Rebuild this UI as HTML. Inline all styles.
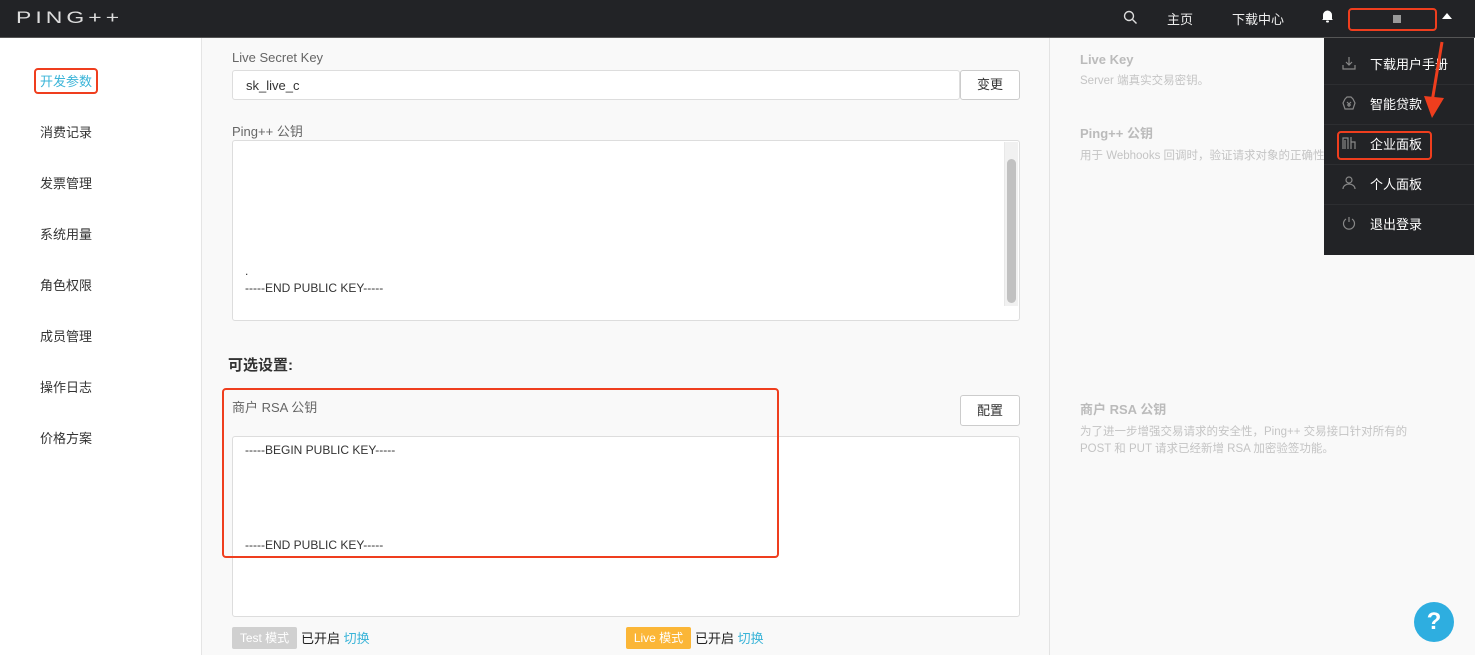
<!DOCTYPE html>
<html><head><meta charset="utf-8"><style>
*{box-sizing:border-box;margin:0;padding:0}
body{width:1475px;height:655px;overflow:hidden;background:#f9f9f9;font-family:"Liberation Sans","Noto Sans CJK SC",sans-serif;font-size:13px;color:#333;position:relative}
.top{position:absolute;left:0;top:0;width:1475px;height:38px;background:#222326;border-bottom:1px solid #555}
.abs{position:absolute}
.side{position:absolute;left:0;top:38px;width:202px;height:617px;background:#fff;border-right:1px solid #e5e5e5}
.side div{position:absolute;left:40px;font-size:13px;color:#333}
.vline{position:absolute;left:1049px;top:38px;width:1px;height:617px;background:#e3e3e3}
.lbl{position:absolute;font-size:13px;color:#666}
.inp{position:absolute;background:#fff;border:1px solid #ddd;border-radius:3px}
.btn{position:absolute;background:#fff;border:1px solid #ccc;border-radius:3px;text-align:center;font-size:13px;color:#333}
.mono{position:absolute;font-size:12px;color:#333}
.rt{position:absolute;left:1080px;color:#bbb}
.rt b{display:block;font-size:13px;color:#bbb}
.rt p{font-size:11.5px;color:#c4c4c4;line-height:17px;margin-top:6px}
.menu{position:absolute;left:1324px;top:38px;width:150px;height:217px;background:#222326}
.menu .it{position:absolute;left:0;width:150px;height:40px;color:#fff;font-size:13px;border-bottom:1px solid #2d2e31}
.menu .it span{position:absolute;left:46px;top:9px}
.menu svg{position:absolute;left:18px;top:11px}
.red{position:absolute;border:2px solid #ef3e1e;border-radius:4px}
</style></head><body>
<div class="top">
<div class="abs" style="left:16px;top:8px;font-size:17px;letter-spacing:3px;color:#ddd;font-weight:300;transform:scaleX(1.35);transform-origin:left">PING++</div>
<svg class="abs" style="left:1123px;top:10px" width="15" height="15" viewBox="0 0 15 15"><circle cx="6" cy="6" r="4.5" fill="none" stroke="#ddd" stroke-width="1.4"/><path d="M9.5 9.5L13.5 13.5" stroke="#ddd" stroke-width="1.4"/></svg>
<div class="abs" style="left:1167px;top:9px;color:#eee">主页</div>
<div class="abs" style="left:1232px;top:9px;color:#eee">下载中心</div>
<svg class="abs" style="left:1321px;top:9px" width="13" height="14" viewBox="0 0 13 14"><path d="M2 10V6a4.5 4.5 0 019 0v4l1 1H1z" fill="#fff"/><rect x="5" y="11.5" width="3" height="2" rx="1" fill="#fff"/></svg>
<div class="abs" style="left:1393px;top:15px;width:8px;height:8px;background:#999"></div>
<div class="abs" style="left:1442px;top:13px;width:0;height:0;border-left:5px solid transparent;border-right:5px solid transparent;border-bottom:6px solid #fff"></div>
</div>
<div class="red" style="left:1348px;top:8px;width:89px;height:23px"></div>

<div class="side">
<div style="top:33px;color:#3ab4d8">开发参数</div>
<div style="top:84px">消费记录</div>
<div style="top:135px">发票管理</div>
<div style="top:186px">系统用量</div>
<div style="top:237px">角色权限</div>
<div style="top:288px">成员管理</div>
<div style="top:339px">操作日志</div>
<div style="top:390px">价格方案</div>
</div>
<div class="red" style="left:34px;top:68px;width:64px;height:26px"></div>
<div class="vline"></div>

<div class="lbl" style="left:232px;top:50px">Live Secret Key</div>
<div class="inp" style="left:232px;top:70px;width:728px;height:30px"><span class="abs" style="left:13px;top:7px;color:#333">sk_live_c</span></div>
<div class="btn" style="left:960px;top:70px;width:60px;height:30px;line-height:28px">变更</div>

<div class="lbl" style="left:232px;top:121px">Ping++ 公钥</div>
<div class="inp" style="left:232px;top:140px;width:788px;height:181px">
<div class="abs" style="right:1px;top:1px;width:14px;height:164px;background:#f1f1f1;border-left:1px solid #e8e8e8"></div>
<div class="abs" style="right:3px;top:18px;width:9px;height:144px;background:#c1c1c1;border-radius:5px"></div>
<span class="mono" style="left:12px;top:123px">.</span>
<span class="mono" style="left:12px;top:140px">-----END PUBLIC KEY-----</span>
</div>

<div class="abs" style="left:228px;top:354px;font-size:15px;font-weight:bold;color:#333">可选设置:</div>
<div class="lbl" style="left:232px;top:397px">商户 RSA 公钥</div>
<div class="btn" style="left:960px;top:395px;width:60px;height:31px;line-height:29px">配置</div>
<div class="inp" style="left:232px;top:436px;width:788px;height:181px">
<span class="mono" style="left:12px;top:6px">-----BEGIN PUBLIC KEY-----</span>
<span class="mono" style="left:12px;top:101px">-----END PUBLIC KEY-----</span>
</div>
<div class="red" style="left:222px;top:388px;width:557px;height:170px"></div>

<div class="abs" style="left:232px;top:627px;width:65px;height:22px;background:#d0d0d0;color:#fff;font-size:12px;line-height:22px;text-align:center;border-radius:2px">Test 模式</div>
<div class="abs" style="left:301px;top:628px;color:#222">已开启 <span style="color:#3ab4d8">切换</span></div>
<div class="abs" style="left:626px;top:627px;width:65px;height:22px;background:#fbb637;color:#fff;font-size:12px;line-height:22px;text-align:center;border-radius:2px">Live 模式</div>
<div class="abs" style="left:695px;top:628px;color:#222">已开启 <span style="color:#3ab4d8">切换</span></div>

<div class="rt" style="top:52px"><b>Live Key</b><p>Server 端真实交易密钥。</p></div>
<div class="rt" style="top:123px"><b>Ping++ 公钥</b><p>用于 Webhooks 回调时，验证请求对象的正确性。</p></div>
<div class="rt" style="top:399px"><b>商户 RSA 公钥</b><p>为了进一步增强交易请求的安全性，Ping++ 交易接口针对所有的<br>POST 和 PUT 请求已经新增 RSA 加密验签功能。</p></div>

<div class="menu">
<div class="it" style="top:7px;height:40px"><svg width="14" height="14" viewBox="0 0 14 14" fill="none" stroke="#888" stroke-width="1.2"><path d="M7 1v8M4 6l3 3 3-3M1 9v4h12V9"/></svg><span>下载用户手册</span></div>
<div class="it" style="top:47px"><svg width="14" height="14" viewBox="0 0 14 14" fill="none" stroke="#888" stroke-width="1.2"><path d="M3 3l2-2h4l2 2 2 4-2 6H3L1 7z"/><path d="M5 6l2 2 2-2M7 8v3M5 9h4"/></svg><span>智能贷款</span></div>
<div class="it" style="top:87px"><svg width="16" height="14" viewBox="0 0 16 14" fill="none" stroke="#888" stroke-width="1.2"><path d="M1 13V2h5v11M3 4v9M9 1v12M9 6h4v7"/></svg><span>企业面板</span></div>
<div class="it" style="top:127px"><svg width="14" height="14" viewBox="0 0 14 14" fill="none" stroke="#888" stroke-width="1.2"><circle cx="7" cy="4" r="3"/><path d="M1 13c0-3 3-5 6-5s6 2 6 5"/></svg><span>个人面板</span></div>
<div class="it" style="top:167px;border:none"><svg width="14" height="14" viewBox="0 0 14 14" fill="none" stroke="#888" stroke-width="1.2"><path d="M4 3a5.5 5.5 0 106 0M7 1v5"/></svg><span>退出登录</span></div>
</div>
<div class="red" style="left:1337px;top:131px;width:95px;height:29px"></div>
<svg class="abs" style="left:1420px;top:40px" width="30" height="80" viewBox="0 0 30 80"><path d="M22 2L12 62" stroke="#ef3e1e" stroke-width="3"/><path d="M4 56l8 22 12-20z" fill="#ef3e1e"/></svg>

<div class="abs" style="left:1414px;top:602px;width:40px;height:40px;border-radius:50%;background:#2eaee0;color:#fff;font-size:24px;font-weight:bold;text-align:center;line-height:40px">?</div>
</body></html>
